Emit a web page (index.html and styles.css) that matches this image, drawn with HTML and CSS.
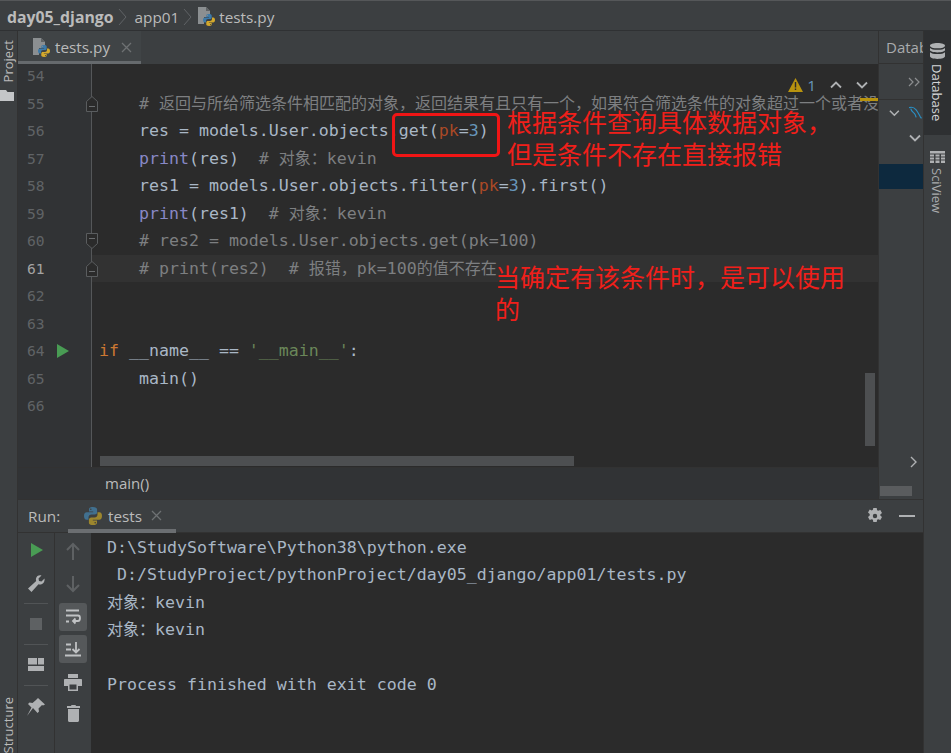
FILE: index.html
```html
<!DOCTYPE html>
<html lang="zh">
<head>
<meta charset="utf-8">
<title>tests.py</title>
<link rel="stylesheet" href="styles.css">
</head>
<body>
<svg class="defs" width="0" height="0">
  <defs>
    <symbol id="py" viewBox="0 0 18 18">
      <path d="M8.8 0C5.600 0 5 1.300 5 2.600V4.500h4.200v.8H2.800C1 5.300 0 6.600 0 9c0 2.400 1 3.700 2.600 3.700H4.500v-2.100c0-1.700 1.300-3 3-3h3.300c1.300 0 2.300-1 2.300-2.300V2.600C13.100 1 11.700 0 8.800 0zM6.800 1.400a.8.800 0 1 1 0 1.600.8.800 0 0 1 0-1.600z" fill="#3d7aa8"/>
      <path d="M9.200 18c3.200 0 3.800-1.300 3.800-2.600v-1.900H8.800v-.8h6.400c1.800 0 2.800-1.300 2.800-3.700 0-2.400-1-3.700-2.600-3.700h-1.900v2.100c0 1.700-1.300 3-3 3H7.200c-1.300 0-2.300 1-2.300 2.300v3.200C4.900 17 6.300 18 9.200 18zm2-1.400a.8.800 0 1 1 0-1.600.8.800 0 0 1 0 1.600z" fill="#d4a92c"/>
    </symbol>
    <symbol id="py-dim" viewBox="0 0 18 18">
      <path d="M8.8 0C5.600 0 5 1.300 5 2.600V4.500h4.200v.8H2.800C1 5.300 0 6.600 0 9c0 2.400 1 3.700 2.600 3.700H4.500v-2.100c0-1.700 1.300-3 3-3h3.300c1.300 0 2.300-1 2.300-2.300V2.600C13.100 1 11.700 0 8.800 0zM6.800 1.400a.8.800 0 1 1 0 1.600.8.800 0 0 1 0-1.600z" fill="#41708f"/>
      <path d="M9.200 18c3.200 0 3.800-1.300 3.800-2.600v-1.900H8.800v-.8h6.400c1.800 0 2.800-1.300 2.800-3.700 0-2.400-1-3.700-2.600-3.700h-1.900v2.100c0 1.700-1.300 3-3 3H7.200c-1.300 0-2.300 1-2.300 2.300v3.200C4.900 17 6.300 18 9.200 18zm2-1.400a.8.800 0 1 1 0-1.600.8.800 0 0 1 0 1.600z" fill="#9c862e"/>
    </symbol>
    <symbol id="pyfile" viewBox="0 0 17 19">
      <path fill="#8b8f91" d="M0 0h8l4 4v6H6v7H0z"/>
      <path fill="#5f6365" d="M8 0l4 4H8z"/>
      <use href="#py" x="5" y="7" width="12" height="12"/>
    </symbol>
    <symbol id="fold-open" viewBox="0 0 12 16">
      <path fill="#2b2b2b" stroke="#5a5d5f" d="M.5 15.500V5.500L6 .5l5.500 5v10z"/>
      <path stroke="#6a6d6f" d="M3 10.500h6"/>
    </symbol>
    <symbol id="fold-close" viewBox="0 0 12 16">
      <path fill="#2b2b2b" stroke="#5a5d5f" d="M.5 .5v10L6 15.500l5.500-5V.5z"/>
      <path stroke="#6a6d6f" d="M3 5.500h6"/>
    </symbol>
    <symbol id="chev-down" viewBox="0 0 12 8">
      <path fill="none" stroke="#afb1b3" stroke-width="1.800" d="M1 1.500l5 5 5-5"/>
    </symbol>
  </defs>
</svg>

<div class="app">
  <header class="crumbs">
    <span class="crumb-bold">day05_django</span>
    <svg class="crumb-sep" width="9" height="18" viewBox="0 0 9 18"><path fill="none" stroke="#606366" d="M1 1l7 8-7 8"/></svg>
    <span>app01</span>
    <svg class="crumb-sep" width="9" height="18" viewBox="0 0 9 18"><path fill="none" stroke="#606366" d="M1 1l7 8-7 8"/></svg>
    <svg class="icon-file" width="17" height="19"><use href="#pyfile"/></svg>
    <span>tests.py</span>
  </header>

  <div class="body">
    <aside class="strip-left">
      <div class="vtext-up project-label">Project</div>
      <svg class="folder" width="14" height="11" viewBox="0 0 14 11"><path fill="#c4c6c8" d="M0 0h6l1.500 2H14v9H0z"/></svg>
      <div class="spacer"></div>
      <div class="vtext-up structure-label">Structure</div>
    </aside>

    <div class="center">
      <div class="upper">
        <section class="editor">
          <div class="tabbar">
            <div class="tab">
              <svg width="17" height="19"><use href="#pyfile"/></svg>
              <span>tests.py</span>
              <svg class="tab-x" width="11" height="11" viewBox="0 0 11 11"><path stroke="#6e7173" stroke-width="1.300" d="M1 1l9 9M10 1l-9 9"/></svg>
            </div>
          </div>

          <div class="code">
            <div class="line first"><span class="no">54</span><span class="src"></span></div>
            <div class="line"><span class="no">55</span><svg class="fold" width="12" height="16"><use href="#fold-open"/></svg><span class="src">    <i class="c"># <em>返回与所给筛选条件相匹配的对象，返回结果有且只有一个，如果符合筛选条件的对象超过一个或者没有都会报错</em></i></span></div>
            <div class="line"><span class="no">56</span><span class="src">    res = models.User.objects.get(<b class="k">pk</b>=<b class="n">3</b>)</span></div>
            <div class="line"><span class="no">57</span><span class="src">    <b class="f">print</b>(res)  <i class="c"># <em>对象：</em>kevin</i></span></div>
            <div class="line"><span class="no">58</span><span class="src">    res1 = models.User.objects.filter(<b class="k">pk</b>=<b class="n">3</b>).first()</span></div>
            <div class="line"><span class="no">59</span><span class="src">    <b class="f">print</b>(res1)  <i class="c"># <em>对象：</em>kevin</i></span></div>
            <div class="line"><span class="no">60</span><svg class="fold" width="12" height="16"><use href="#fold-close"/></svg><span class="src">    <i class="c"># res2 = models.User.objects.get(pk=100)</i></span></div>
            <div class="line current"><span class="no">61</span><svg class="fold" width="12" height="16"><use href="#fold-open"/></svg><span class="src">    <i class="c"># print(res2)  # <em>报错，</em>pk=100<em>的值不存在</em></i></span></div>
            <div class="line"><span class="no">62</span><span class="src"></span></div>
            <div class="line"><span class="no">63</span><span class="src"></span></div>
            <div class="line"><span class="no">64</span><svg class="gutter-run" width="12" height="14" viewBox="0 0 12 14"><path fill="#499c54" d="M0 0l12 7-12 7z"/></svg><span class="src"><b class="kw">if</b> __name__ == <b class="s">'__main__'</b>:</span></div>
            <div class="line"><span class="no">65</span><span class="src">    main()</span></div>
            <div class="line"><span class="no">66</span><span class="src"></span></div>
            <div class="line filler"><span class="no"></span><span class="src"></span></div>

            <div class="inspect">
              <svg width="15" height="14" viewBox="0 0 15 14"><path fill="#b8930f" d="M7.500 0L15 14H0z"/><path fill="#2b2b2b" d="M6.800 4h1.400v5.500H6.800zM6.800 10.500h1.400V12H6.800z"/></svg>
              <span class="inspect-n">1</span>
              <svg class="inspect-up" width="12" height="8"><use href="#chev-down"/></svg>
              <svg width="12" height="8"><use href="#chev-down"/></svg>
            </div>
            <div class="mark-yellow"></div>
            <div class="vscroll"></div>
            <div class="hscroll"></div>

            <div class="redbox"></div>
            <div class="note note-a">根据条件查询具体数据对象，<br>但是条件不存在直接报错</div>
            <div class="note note-b">当确定有该条件时，是可以使用<br>的</div>
          </div>

          <div class="statusline">main()</div>
        </section>

        <aside class="dbpanel">
          <div class="db-head"><span>Database</span></div>
          <div class="db-row db-tools"><svg width="12" height="10" viewBox="0 0 12 10"><path fill="none" stroke="#8c8e90" stroke-width="1.200" d="M1 1l4 4-4 4M7 1l4 4-4 4"/></svg></div>
          <div class="db-row db-conn">
            <svg width="12" height="8"><use href="#chev-down"/></svg>
            <svg class="mysql" width="16" height="14" viewBox="0 0 16 14"><path fill="none" stroke="#2a8fc4" stroke-width="1.300" d="M0 1c3-1 6 0 8 2.500 2 2.500 3 5 4.500 7.500l1.500 2M2 2c.5 3 2.500 4 4 5.500 1 1 1.500 2.500 2 4.500"/></svg>
          </div>
          <div class="db-row db-sub"><svg width="12" height="8"><use href="#chev-down"/></svg></div>
          <div class="db-selected"></div>
          <div class="spacer"></div>
          <svg class="db-more" width="8" height="12" viewBox="0 0 8 12"><path fill="none" stroke="#afb1b3" stroke-width="1.400" d="M1 1l5 5-5 5"/></svg>
          <div class="db-scroll"></div>
        </aside>
      </div>

      <section class="run">
        <div class="run-head">
          <span class="run-title">Run:</span>
          <div class="run-tab">
            <svg width="18" height="18"><use href="#py-dim"/></svg>
            <span>tests</span>
            <svg width="11" height="11" viewBox="0 0 11 11"><path stroke="#6e7173" stroke-width="1.300" d="M1 1l9 9M10 1l-9 9"/></svg>
          </div>
          <div class="spacer"></div>
          <svg class="gear" width="16" height="16" viewBox="0 0 16 16"><path fill="#afb1b3" fill-rule="evenodd" d="M6.300 0h3.400l.4 2.200 1.100.6 2.100-.8 1.700 3-1.700 1.400v1.200l1.700 1.400-1.700 3-2.100-.8-1.100.6-.4 2.200H6.300l-.4-2.200-1.100-.6-2.100.8-1.700-3 1.700-1.400V6L1 4.600l1.700-3 2.100.8 1.100-.6zM8 5.800a2.200 2.200 0 1 0 0 4.400 2.200 2.200 0 0 0 0-4.400z"/></svg>
          <div class="minimize"></div>
        </div>
        <div class="run-main">
          <div class="tools tools-a">
            <svg class="t-run" width="12" height="14" viewBox="0 0 12 14"><path fill="#499c54" d="M0 0l12 7-12 7z"/></svg>
            <svg class="t-wrench" width="17" height="17" viewBox="0 0 17 17"><path fill="#afb1b3" d="M16.500 3.500l-3 3-2.500-.5-.5-2.500 3-3c-2.500-.8-5 .5-5.500 3-.2.900-.1 1.800.2 2.500L0 13.500 3.500 17l7-7.700c.8.300 1.700.4 2.500.2 2.500-.5 4-3.500 3.500-6z"/></svg>
            <div class="t-sep"></div>
            <div class="t-stop"></div>
            <div class="t-sep"></div>
            <svg class="t-layout" width="16" height="13" viewBox="0 0 16 13"><path fill="#afb1b3" d="M0 0h9v6.500H0zM10 0h6v6.500h-6zM0 8h16v5H0z"/></svg>
            <div class="t-sep"></div>
            <svg class="t-pin" width="18" height="18" viewBox="0 0 18 18"><path fill="#afb1b3" d="M11 0l7 6.500-2 1-1-.5-3.500 3.500.5 3-1.500 1.500L6 10l-6 8 4.500-8.500L1 6l1.500-1.500 3 .5L9 2 10 1z"/></svg>
          </div>
          <div class="tools tools-b">
            <svg class="t-up" width="14" height="18" viewBox="0 0 14 18"><path fill="none" stroke="#5e6163" stroke-width="2" d="M7 18V2M1 8l6-6 6 6"/></svg>
            <svg class="t-down" width="14" height="17" viewBox="0 0 14 17"><path fill="none" stroke="#5e6163" stroke-width="2" d="M7 0v15M1 9l6 6 6-6"/></svg>
            <div class="t-toggle"><svg width="16" height="16" viewBox="0 0 16 16"><path fill="none" stroke="#c0c2c4" stroke-width="1.800" d="M1 1.500h13M1 6.500h12c1.500 0 2 1 2 2.500s-.5 3-2 3H8M10.500 9.500L8 12l2.500 2.500M1 12.500h3"/></svg></div>
            <div class="t-toggle t-toggle2"><svg width="16" height="16" viewBox="0 0 16 16"><path fill="none" stroke="#c0c2c4" stroke-width="1.800" d="M1 3.500h5M1 8.500h5M0 14.500h16M11 1v10M7.500 8l3.500 3.500L14.500 8"/></svg></div>
            <svg class="t-print" width="18" height="17" viewBox="0 0 18 17"><path fill="#afb1b3" fill-rule="evenodd" d="M4 0h10v4H4zM1 5h16c.6 0 1 .4 1 1v6h-4v5H4v-5H0V6c0-.6.4-1 1-1zM5.500 10.500v5h7v-5z"/></svg>
            <svg class="t-trash" width="13" height="17" viewBox="0 0 13 17"><path fill="#afb1b3" d="M4.500 0h4l.5 1h4v2H0V1h4zM1 4h11v11.500c0 .8-.7 1.500-1.500 1.500h-8C1.700 17 1 16.300 1 15.500z"/></svg>
          </div>
          <pre class="console">D:\StudySoftware\Python38\python.exe
 D:/StudyProject/pythonProject/day05_django/app01/tests.py
<em>对象：</em>kevin
<em>对象：</em>kevin

Process finished with exit code 0</pre>
        </div>
      </section>
    </div>

    <aside class="strip-right">
      <div class="rtab rtab-active">
        <svg width="15" height="16" viewBox="0 0 14 18" preserveAspectRatio="none"><path fill="#afb1b3" d="M0 3c0-1.700 3-3 7-3s7 1.300 7 3-3 3-7 3-7-1.300-7-3zM0 5.500C1 7 3.800 7.600 7 7.600S13 7 14 5.500V8c0 1.500-3 2.700-7 2.700S0 9.500 0 8zM0 10.500C1 12 3.800 12.500 7 12.500s6-.5 7-2V15c0 1.700-3 3-7 3s-7-1.300-7-3z"/></svg>
        <span class="vtext-down">Database</span>
      </div>
      <div class="rtab">
        <svg width="15" height="12" viewBox="0 0 15 14" preserveAspectRatio="none"><path fill="#afb1b3" d="M0 0h15v3H0zM0 4h4v2.500H0zM5.500 4h4v2.500h-4zM11 4h4v2.500h-4zM0 7.500h4V10H0zM5.500 7.500h4V10h-4zM11 7.500h4V10h-4zM0 11h4v3H0zM5.500 11h4v3h-4zM11 11h4v3h-4z"/></svg>
        <span class="vtext-down rtab-dim">SciView</span>
      </div>
    </aside>
  </div>
</div>
</body>
</html>
```

FILE: styles.css
```css
* { box-sizing: border-box; }
html, body { margin: 0; padding: 0; }
body { width: 951px; height: 753px; overflow: hidden; background: #3c3f41; color: #bbbbbb; font-family: "Open Sans", "Noto Sans CJK SC", sans-serif; }
.defs { position: absolute; }
.spacer { flex: 1; }
em { font-style: normal; font-size: 16px; }

.app { display: flex; flex-direction: column; height: 753px; }

.crumbs { display: flex; align-items: center; flex: none; height: 31px; padding: 2px 0 0 7px; background: #3c3f41; border-top: 1px solid #555759; border-bottom: 1px solid #2f3133; font-size: 15.3px; color: #bbbbbb; }
.crumb-bold { font-weight: 700; font-size: 15.8px; }
.crumb-sep { margin: 0 8px 0 4px; }
.icon-file { margin-right: 4px; margin-left: -2px; }

.body { display: flex; flex: 1; min-height: 0; }

.strip-left { display: flex; flex-direction: column; align-items: flex-start; flex: none; width: 18px; background: #3c3f41; border-right: 1px solid #323232; overflow: hidden; }
.vtext-up { writing-mode: vertical-rl; transform: rotate(180deg); font-size: 13px; color: #bbbbbb; line-height: 16px; }
.project-label { margin-top: 9px; }
.folder { margin: 8px 0 0 0; flex: none; }
.structure-label { margin-bottom: 0; flex: none; }

.center { display: flex; flex-direction: column; flex: 1; min-width: 0; }
.upper { display: flex; height: 469px; flex: none; border-bottom: 1px solid #323232; }

.editor { display: flex; flex-direction: column; width: 860px; flex: none; }
.tabbar { display: flex; height: 33px; flex: none; background: #3c3f41; }
.tab { display: flex; align-items: center; gap: 5px; width: 123px; padding: 2px 0 0 15px; background: #404446; border-bottom: 3px solid #666a6d; font-size: 15.3px; color: #bbbbbb; }
.tab-x { margin-left: 6px; }

.code { position: relative; flex: 1; min-height: 0; overflow: hidden; background: #2b2b2b; font-family: "DejaVu Sans Mono", "Noto Sans CJK SC", monospace; font-size: 16.6px; color: #a9b7c6; }
.line { position: relative; display: flex; flex: none; height: 27.5px; line-height: 27.5px; white-space: pre; }
.line.first { margin-top: -2px; }
.line.filler { height: 70px; }
.no { flex: none; width: 74px; padding-left: 9px; background: #313335; border-right: 1px solid #555759; font-size: 14.6px; color: #606366; }
.src { flex: 1; padding-left: 7px; min-width: 0; overflow: hidden; }
.current .src { background: #323232; }
.current .no { color: #a4a3a3; }
.fold { position: absolute; left: 68px; top: 6px; }
.gutter-run { position: absolute; left: 39px; top: 7px; }
.src i { font-style: normal; }
.src b { font-weight: 400; }
.c { color: #7d7f81; }
.k { color: #aa4926; }
.n { color: #6897bb; }
.f { color: #8888c6; }
.kw { color: #cc7832; }
.s { color: #6a8759; }

.inspect { position: absolute; top: 11px; right: 10px; display: flex; align-items: center; gap: 14px; padding-left: 6px; background: #2b2b2b; font-family: "Open Sans", sans-serif; font-size: 15.3px; }
.inspect-n { color: #6897bb; margin-left: -10px; }
.inspect-up { transform: rotate(180deg); }
.mark-yellow { position: absolute; top: 34px; right: 0; width: 18px; height: 3px; background: #b8930f; }
.vscroll { position: absolute; top: 309px; right: 3px; width: 10px; height: 73px; background: #4d4f51; }
.hscroll { position: absolute; top: 392px; left: 82px; width: 474px; height: 10px; background: #4d4f51; }
.redbox { position: absolute; left: 374px; top: 49px; width: 108px; height: 44px; border: 3.5px solid #f01515; border-radius: 5px; }
.note { position: absolute; font-family: "Noto Sans CJK SC", sans-serif; font-size: 25px; line-height: 32px; color: #f01f1a; white-space: nowrap; }
.note-a { left: 489px; top: 41px; }
.note-b { left: 477px; top: 196px; }

.statusline { display: flex; align-items: center; flex: none; height: 32px; padding: 0 0 2px 87px; background: #313335; border-top: 1px solid #323232; font-size: 15px; color: #bbbbbb; }

.dbpanel { position: relative; display: flex; flex-direction: column; flex: 1; background: #3c3f41; border-left: 1px solid #323232; overflow: hidden; }
.db-head { height: 33px; flex: none; padding: 6px 0 0 7px; border-bottom: 1px solid #323232; font-size: 15px; white-space: nowrap; color: #a9abad; }
.db-row { display: flex; flex: none; align-items: center; }
.db-tools { height: 36px; justify-content: flex-end; padding-right: 3px; border-bottom: 1px solid #323232; }
.db-conn { height: 25px; padding: 0 0 0 10px; gap: 9px; }
.db-sub { height: 25px; justify-content: flex-end; padding-right: 2px; }
.db-selected { height: 25px; flex: none; margin-top: 14px; background: #0d293e; }
.db-more { align-self: flex-end; margin: 0 5px 18px 0; flex: none; }
.db-scroll { width: 32px; height: 10px; margin: 0 0 3px 1px; flex: none; background: #5a5c5e; }

.run { display: flex; flex-direction: column; flex: 1; min-height: 0; }
.run-head { display: flex; align-items: center; flex: none; height: 33px; background: #3c3f41; border-bottom: 1px solid #323232; padding-right: 8px; font-size: 15.3px; }
.run-title { margin-left: 10px; width: 40px; }
.run-tab { display: flex; align-items: center; gap: 6px; width: 108px; height: 33px; padding: 3px 0 0 16px; border-bottom: 4px solid #6b6e71; }
.run-tab svg:last-child { margin-left: 3px; }
.gear { margin-right: 16px; }
.minimize { width: 16px; height: 2px; background: #afb1b3; }

.run-main { display: flex; flex: 1; min-height: 0; }
.tools { display: flex; flex-direction: column; align-items: center; flex: none; background: #3c3f41; }
.tools-a { width: 37px; border-right: 1px solid #323232; padding-top: 10px; }
.tools-b { width: 36px; padding-top: 9px; }
.t-run { margin-left: 2px; }
.t-wrench { margin-top: 18px; }
.t-sep { width: 24px; height: 1px; background: #515456; margin-top: 11px; }
.t-stop { width: 12px; height: 12px; margin-top: 14px; background: #5e6163; }
.t-stop + .t-sep { margin-top: 14px; }
.t-layout { margin-top: 13px; }
.t-layout + .t-sep { margin-top: 14px; }
.t-pin { margin-top: 12px; }
.t-down { margin-top: 16px; }
.t-toggle { display: flex; align-items: center; justify-content: center; width: 28px; height: 28px; margin-top: 10px; background: #55585a; border-radius: 3px; }
.t-toggle2 { margin-top: 4px; }
.t-print { margin-top: 11px; }
.t-trash { margin-top: 14px; }

.console { flex: 1; margin: 0; padding: 1px 0 0 16px; background: #2b2b2b; font-family: "DejaVu Sans Mono", "Noto Sans CJK SC", monospace; font-size: 16.6px; line-height: 27.4px; color: #a9b7c6; overflow: hidden; }

.strip-right { display: flex; flex-direction: column; flex: none; width: 28px; background: #3c3f41; border-left: 1px solid #323232; }
.rtab { display: flex; flex-direction: column; align-items: center; gap: 5px; padding: 12px 0 10px; }
.rtab-active { height: 104px; background: #2e3032; }
.rtab + .rtab { padding-top: 16px; }
.vtext-down { writing-mode: vertical-rl; font-size: 13px; line-height: 18px; margin-right: 1px; color: #d4d6d8; }
.rtab-dim { color: #a9abad; }
```
